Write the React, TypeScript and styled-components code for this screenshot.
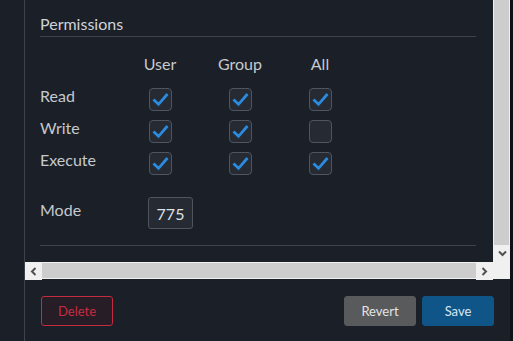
import React from "react";
import styled, { createGlobalStyle } from "styled-components";

const colors = {
  bg: "#1b1f27",
  line: "#3d424b",
  text: "#c6c9ce",
  boxBg: "#252a33",
  boxBorder: "#4f545e",
  check: "#2a8be0",
  track: "#f0f0f0",
  thumb: "#cdcdcd",
  arrow: "#505050",
};

const GlobalStyle = createGlobalStyle`
  html, body {
    margin: 0;
    padding: 0;
    background: ${colors.bg};
    overflow: hidden;
  }
  body {
    font-family: Lato, "Open Sans", sans-serif;
  }
`;

const Page = styled.div`
  display: flex;
  width: 513px;
  height: 341px;
  background: ${colors.bg};
`;

const Gutter = styled.div`
  width: 24px;
  flex-shrink: 0;
`;

const Edge = styled.div`
  width: 3px;
  flex-shrink: 0;
  background: #0e1116;
`;

const Panel = styled.div`
  flex: 1;
  display: flex;
  flex-direction: column;
  border-left: 1px solid ${colors.line};
`;

const ScrollFrame = styled.div`
  display: grid;
  grid-template-columns: 1fr 17px;
  grid-template-rows: 1fr 17px;
  height: 279px;
`;

const Viewport = styled.div`
  overflow: hidden;
  padding: 14px 17px 0 15px;
`;

const Heading = styled.h3`
  margin: 0;
  padding-bottom: 2px;
  border-bottom: 1px solid ${colors.line};
  font-size: 16px;
  line-height: 20px;
  font-weight: 400;
  color: #d0d3d8;
`;

const Grid = styled.div`
  display: grid;
  grid-template-columns: 80px repeat(3, 80px);
  grid-auto-rows: 32px;
  margin-top: 17px;
`;

const Cell = styled.div<{ $head?: boolean }>`
  font-size: 16px;
  line-height: 20px;
  color: ${colors.text};
  display: flex;
  justify-content: ${(p) => (p.$head ? "center" : "flex-start")};
  align-items: flex-start;
`;

const Box = styled.span`
  width: 21px;
  height: 21px;
  margin-top: 2px;
  border: 1px solid ${colors.boxBorder};
  border-radius: 4px;
  background: ${colors.boxBg};
  display: flex;
  align-items: center;
  justify-content: center;
`;

const ModeRow = styled.div`
  display: flex;
  align-items: flex-start;
  margin-top: 15px;
  padding-bottom: 16px;
  border-bottom: 1px solid ${colors.line};
`;

const ModeLabel = styled.label`
  width: 108px;
  margin-top: 3px;
  font-size: 16px;
  line-height: 20px;
  color: ${colors.text};
`;

const ModeInput = styled.div`
  box-sizing: border-box;
  width: 45px;
  height: 32px;
  border: 1px solid ${colors.boxBorder};
  border-radius: 3px;
  background: ${colors.boxBg};
  color: #dfe2e6;
  font-size: 16px;
  display: flex;
  align-items: center;
  justify-content: center;
`;

const VBar = styled.div`
  background: ${colors.track};
  display: flex;
  flex-direction: column;
  padding: 0 1px;
`;

const VThumb = styled.div`
  flex: 1;
  background: ${colors.thumb};
`;

const HBar = styled.div`
  background: ${colors.track};
  display: flex;
  padding: 1px 0;
`;

const HThumb = styled.div`
  flex: 1;
  background: ${colors.thumb};
`;

const ArrowBtn = styled.div`
  width: 17px;
  height: 17px;
  flex-shrink: 0;
  display: flex;
  align-items: center;
  justify-content: center;
  background: ${colors.track};
`;

const Corner = styled.div`
  background: ${colors.track};
`;

const Footer = styled.div`
  display: flex;
  align-items: flex-start;
  justify-content: space-between;
  padding: 17px 16px 0 16px;
`;

const Actions = styled.div`
  display: flex;
  gap: 6px;
`;

const Button = styled.button<{ $variant: "danger" | "neutral" | "primary" }>`
  width: 72px;
  height: 30px;
  border-radius: 3px;
  font-family: Lato, sans-serif;
  font-size: 13px;
  cursor: pointer;
  border: 1px solid
    ${(p) =>
      p.$variant === "danger"
        ? "#c42a40"
        : p.$variant === "neutral"
        ? "#595a5c"
        : "#0f5587"};
  background: ${(p) =>
    p.$variant === "danger"
      ? "#261d26"
      : p.$variant === "neutral"
      ? "#595a5c"
      : "#0f5587"};
  color: ${(p) =>
    p.$variant === "danger"
      ? "#c72c42"
      : p.$variant === "neutral"
      ? "#e4e4e4"
      : "#d8e7f3"};
`;

const Check = ({ checked }: { checked: boolean }) => (
  <Box>
    {checked && (
      <svg width="21" height="21" viewBox="0 0 21 21">
        <polyline
          points="3.5,10.5 8.5,15.3 17.5,5"
          fill="none"
          stroke={colors.check}
          strokeWidth="2.8"
        />
      </svg>
    )}
  </Box>
);

const Chevron = ({ dir }: { dir: "left" | "right" | "down" }) => {
  const pts =
    dir === "left"
      ? "5.5,1 2,4.5 5.5,8"
      : dir === "right"
      ? "1.5,1 5,4.5 1.5,8"
      : "1,1.5 4.5,5 8,1.5";
  const w = dir === "down" ? 9 : 7;
  const h = dir === "down" ? 7 : 9;
  return (
    <svg width={w} height={h} viewBox={`0 0 ${w} ${h}`}>
      <polyline points={pts} fill="none" stroke={colors.arrow} strokeWidth="2" />
    </svg>
  );
};

const rows = [
  { name: "Read", perms: [true, true, true] },
  { name: "Write", perms: [true, true, false] },
  { name: "Execute", perms: [true, true, true] },
];

const App = () => (
  <>
    <GlobalStyle />
    <Page>
      <Gutter />
      <Panel>
        <ScrollFrame>
          <Viewport>
            <Heading>Permissions</Heading>
            <Grid>
              <Cell />
              <Cell $head>User</Cell>
              <Cell $head>Group</Cell>
              <Cell $head>All</Cell>
              {rows.map((r) => (
                <React.Fragment key={r.name}>
                  <Cell>{r.name}</Cell>
                  {r.perms.map((p, i) => (
                    <Cell $head key={i}>
                      <Check checked={p} />
                    </Cell>
                  ))}
                </React.Fragment>
              ))}
            </Grid>
            <ModeRow>
              <ModeLabel>Mode</ModeLabel>
              <ModeInput>775</ModeInput>
            </ModeRow>
          </Viewport>
          <VBar>
            <VThumb />
            <ArrowBtn>
              <Chevron dir="down" />
            </ArrowBtn>
          </VBar>
          <HBar>
            <ArrowBtn>
              <Chevron dir="left" />
            </ArrowBtn>
            <HThumb />
            <ArrowBtn>
              <Chevron dir="right" />
            </ArrowBtn>
          </HBar>
          <Corner />
        </ScrollFrame>
        <Footer>
          <Button $variant="danger">Delete</Button>
          <Actions>
            <Button $variant="neutral">Revert</Button>
            <Button $variant="primary">Save</Button>
          </Actions>
        </Footer>
      </Panel>
      <Edge />
    </Page>
  </>
);

export default App;
